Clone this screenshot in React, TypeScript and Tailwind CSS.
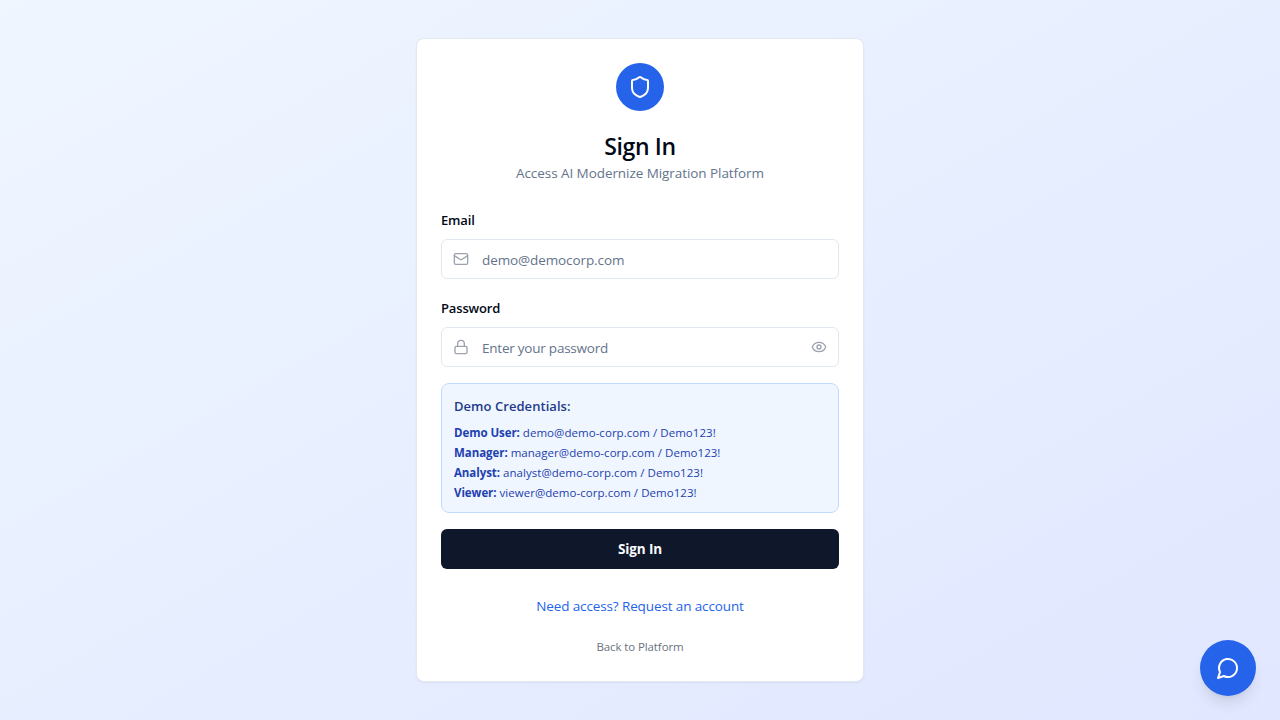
import type { ReactNode } from "react";

const iconProps = {
  viewBox: "0 0 24 24",
  fill: "none",
  stroke: "currentColor",
  strokeWidth: 2,
  strokeLinecap: "round" as const,
  strokeLinejoin: "round" as const,
};

function ShieldIcon() {
  return (
    <svg {...iconProps} className="size-6 text-white">
      <path d="M20 13c0 5-3.5 7.5-7.66 8.95a1 1 0 0 1-.67-.01C7.5 20.5 4 18 4 13V6a1 1 0 0 1 1-1c2 0 4.5-1.2 6.24-2.72a1.17 1.17 0 0 1 1.52 0C14.51 3.81 17 5 19 5a1 1 0 0 1 1 1z" />
    </svg>
  );
}

function MailIcon() {
  return (
    <svg {...iconProps} className="size-4 shrink-0 text-[#9ca3af]">
      <rect width="20" height="16" x="2" y="4" rx="2" />
      <path d="m22 7-8.97 5.7a1.94 1.94 0 0 1-2.06 0L2 7" />
    </svg>
  );
}

function LockIcon() {
  return (
    <svg {...iconProps} className="size-4 shrink-0 text-[#9ca3af]">
      <rect width="18" height="11" x="3" y="11" rx="2" ry="2" />
      <path d="M7 11V7a5 5 0 0 1 10 0v4" />
    </svg>
  );
}

function EyeIcon() {
  return (
    <svg {...iconProps} className="size-4 text-[#9ca3af]">
      <path d="M2.062 12.348a1 1 0 0 1 0-.696 10.75 10.75 0 0 1 19.876 0 1 1 0 0 1 0 .696 10.75 10.75 0 0 1-19.876 0" />
      <circle cx="12" cy="12" r="3" />
    </svg>
  );
}

function ChatIcon() {
  return (
    <svg {...iconProps} className="size-6">
      <path d="M7.9 20A9 9 0 1 0 4 16.1L2 22Z" />
    </svg>
  );
}

type FieldProps = {
  id: string;
  label: string;
  type: string;
  placeholder: string;
  icon: ReactNode;
  action?: ReactNode;
  inputClass: string;
};

function Field({ id, label, type, placeholder, icon, action, inputClass }: FieldProps) {
  return (
    <div className="flex flex-col gap-2">
      <label htmlFor={id} className="h-6 text-[13px] leading-[26px] font-semibold tracking-[-0.15px] text-[#020817]">
        {label}
      </label>
      <div className="flex h-10 items-center rounded-md border border-[#e2e8f0] bg-white px-[11px]">
        {icon}
        <input
          id={id}
          type={type}
          placeholder={placeholder}
          className={`ml-[13px] h-full min-w-0 flex-1 bg-transparent pt-px text-[13.5px] outline-none placeholder:text-[#64748b] ${inputClass}`}
        />
        {action}
      </div>
    </div>
  );
}

const credentials = [
  { role: "Demo User:", login: "demo@demo-corp.com / Demo123!" },
  { role: "Manager:", login: "manager@demo-corp.com / Demo123!" },
  { role: "Analyst:", login: "analyst@demo-corp.com / Demo123!" },
  { role: "Viewer:", login: "viewer@demo-corp.com / Demo123!" },
];

export default function App() {
  return (
    <div className="flex h-screen items-center justify-center bg-linear-to-br/srgb from-[#eff6ff] to-[#e0e7ff] font-['Open_Sans',sans-serif] text-[#020817]">
      <main className="h-[644px] w-[448px] rounded-lg border border-[#e2e8f0] bg-white px-6 pt-6 shadow-xs">
        <header className="flex flex-col items-center">
          <div className="flex size-12 items-center justify-center rounded-full bg-[#2563eb]">
            <ShieldIcon />
          </div>
          <h1 className="mt-[19px] text-[23px] leading-8 font-semibold tracking-[-0.35px]">Sign In</h1>
          <p className="mt-px text-[13.5px] leading-5 tracking-[-0.066px] text-[#64748b]">
            Access AI Modernize Migration Platform
          </p>
        </header>

        <form className="mt-6 flex flex-col gap-4" onSubmit={(e) => e.preventDefault()}>
          <Field id="email" label="Email" type="email" placeholder="demo@democorp.com" icon={<MailIcon />} inputClass="tracking-[-0.1px]" />
          <Field
            id="password"
            label="Password"
            type="password"
            placeholder="Enter your password"
            icon={<LockIcon />}
            inputClass="tracking-[-0.23px]"
            action={
              <button type="button" aria-label="Show password">
                <EyeIcon />
              </button>
            }
          />

          <section className="h-[130px] rounded-lg border border-[#bfdbfe] bg-[#eff6ff] px-3 pt-3">
            <h2 className="text-[13px] leading-5 font-semibold tracking-[0.05px] text-[#1e3a8a]">Demo Credentials:</h2>
            <ul className="mt-[9px] flex flex-col gap-1 text-[11.5px] leading-4 tracking-[0.04px] text-[#1e40af]">
              {credentials.map(({ role, login }) => (
                <li key={role}>
                  <strong className="font-bold tracking-[-0.06px]">{role}</strong> {login}
                </li>
              ))}
            </ul>
          </section>

          <button type="submit" className="h-10 rounded-md bg-[#0f172a] text-[13.5px] font-bold tracking-[-0.1px] text-[#f8fafc]">
            Sign In
          </button>
        </form>

        <div className="mt-[27px] flex flex-col items-center">
          <a href="#request" className="text-[13.5px] leading-5 tracking-[-0.12px] text-[#2563eb]">
            Need access? Request an account
          </a>
          <a href="#platform" className="mt-[23px] text-[11.5px] leading-4 tracking-[-0.1px] text-[#6b7280]">
            Back to Platform
          </a>
        </div>
      </main>

      <button
        type="button"
        aria-label="Open chat"
        className="fixed right-6 bottom-6 flex size-14 items-center justify-center rounded-full bg-[#2563eb] text-white shadow-lg"
      >
        <ChatIcon />
      </button>
    </div>
  );
}
